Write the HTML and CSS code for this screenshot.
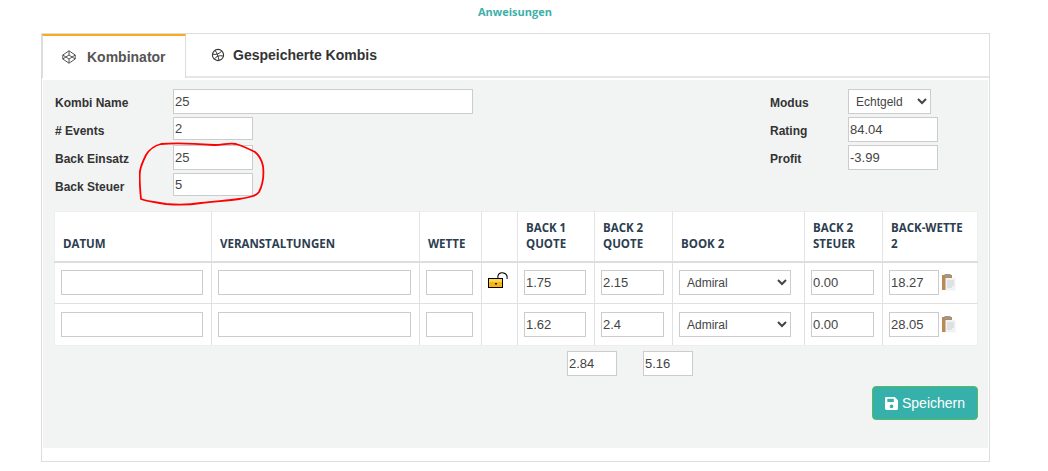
FILE: index.html
```html
<!DOCTYPE html>
<html lang="de">
<head>
<meta charset="utf-8">
<title>Kombinator</title>
<link rel="stylesheet" href="styles.css">
</head>
<body>
<div class="top-link"><a href="#">Anweisungen</a></div>
<div class="card">
  <div class="tabs">
    <div class="tab active">
      <svg class="tab-icon" viewBox="0 0 14 14"><path d="M7 .8 13.200 5V9L7 13.200 .8 9V5Z M.8 5 7 9 13.200 5 M.8 9 7 5 13.200 9 M7 .8V5M7 9V13.200" fill="none" stroke="#555" stroke-width="1"/></svg>
      <span>Kombinator</span>
    </div>
    <div class="tab">
      <svg class="tab-icon" viewBox="0 0 14 14"><circle cx="7" cy="7" r="5.600" fill="none" stroke="#333" stroke-width="1.100"/><path d="M4 2.200C6 5 7.500 8.500 8 12.400M1.600 6.200C5 7 8.500 5.800 10.800 3M3.400 11.200C5 8.200 8.600 7 12.500 8.200" fill="none" stroke="#333" stroke-width="1"/></svg>
      <span>Gespeicherte Kombis</span>
    </div>
  </div>
  <div class="panel">
    <div class="form-head">
      <div class="form-col left">
        <div class="row"><label>Kombi Name</label><input class="field wide" value="25"></div>
        <div class="row"><label># Events</label><input class="field short low" value="2"></div>
        <div class="row"><label>Back Einsatz</label><input class="field short" value="25"></div>
        <div class="row"><label>Back Steuer</label><input class="field short low" value="5"></div>
      </div>
      <div class="form-col right">
        <div class="row"><label>Modus</label><select class="field mode"><option>Echtgeld</option></select></div>
        <div class="row"><label>Rating</label><input class="field stat" value="84.04"></div>
        <div class="row"><label>Profit</label><input class="field stat" value="-3.99"></div>
      </div>
    </div>
    <table class="grid">
      <colgroup>
        <col class="c1"><col class="c2"><col class="c3"><col class="c4"><col class="c5"><col class="c6"><col class="c7"><col class="c8"><col class="c9">
      </colgroup>
      <thead>
        <tr>
          <th>DATUM</th><th>VERANSTALTUNGEN</th><th>WETTE</th><th></th>
          <th>BACK 1 QUOTE</th><th>BACK 2 QUOTE</th><th>BOOK 2</th><th>BACK 2 STEUER</th><th>BACK-WETTE 2</th>
        </tr>
      </thead>
      <tbody>
        <tr>
          <td><input class="field fill"></td><td><input class="field fill"></td><td><input class="field fill"></td>
          <td class="lock-cell"><svg class="lock" viewBox="0 0 20 16"><path d="M10 7V4.500C10 2.200 11.800 .8 14 .8s5 1.400 5 3.700V7" fill="none" stroke="#000" stroke-width="1.200"/><path d="M11.500 7V4.800C11.500 3.200 12.700 2.200 14 2.200s3.500 1 3.500 2.600V7" fill="none" stroke="#fff" stroke-width="1.600"/><rect x=".5" y="6.500" width="14" height="9" fill="#f7b512" stroke="#000"/><rect x="1" y="7" width="13" height="3" fill="#fcd354"/><rect x="7" y="11" width="2" height="1.500" fill="#222"/></svg></td>
          <td><input class="field fill" value="1.75"></td><td><input class="field fill" value="2.15"></td>
          <td class="book-cell"><select class="field fill book"><option>Admiral</option></select></td>
          <td><input class="field fill" value="0.00"></td>
          <td class="bet"><input class="field bet-input" value="18.27"><svg class="clip" viewBox="0 0 14 17"><rect x="0" y="1" width="10" height="15" fill="#b98a55"/><rect x="2.500" y="0" width="6" height="3" fill="#9a9a90"/><rect x="3.500" y="4" width="10" height="12.500" fill="#f0f2f4"/><path d="M5 7H12M5 9H12M5 11H12M5 13H10" stroke="#cdd0d5"/></svg></td>
        </tr>
        <tr>
          <td><input class="field fill"></td><td><input class="field fill"></td><td><input class="field fill"></td>
          <td></td>
          <td><input class="field fill" value="1.62"></td><td><input class="field fill" value="2.4"></td>
          <td class="book-cell"><select class="field fill book"><option>Admiral</option></select></td>
          <td><input class="field fill" value="0.00"></td>
          <td class="bet"><input class="field bet-input" value="28.05"><svg class="clip" viewBox="0 0 14 17"><rect x="0" y="1" width="10" height="15" fill="#b98a55"/><rect x="2.500" y="0" width="6" height="3" fill="#9a9a90"/><rect x="3.500" y="4" width="10" height="12.500" fill="#f0f2f4"/><path d="M5 7H12M5 9H12M5 11H12M5 13H10" stroke="#cdd0d5"/></svg></td>
        </tr>
      </tbody>
    </table>
    <div class="totals">
      <input class="field total" value="2.84">
      <input class="field total" value="5.16">
    </div>
    <div class="actions">
      <button class="save" type="button">
        <svg class="save-icon" viewBox="0 0 14 14"><path d="M1.500 0H10.500L14 3.500V12.500A1.500 1.500 0 0 1 12.500 14H1.500A1.500 1.500 0 0 1 0 12.500V1.500A1.500 1.500 0 0 1 1.500 0ZM2.500 2V5.500H9.500V2ZM7 8A2 2 0 1 0 7 12 2 2 0 1 0 7 8Z" fill="#fff" fill-rule="evenodd"/></svg>
        Speichern
      </button>
    </div>
  </div>
</div>
<svg class="scribble" viewBox="0 0 140 75"><path d="M75 4C85 4 90 1.500 97 3 104 5 110 8 116 11 121 15 123 20 124 25 125 33 124 43 120 51 117 55 112 56 100 58 88 60 76 60 62 62 50 64 38 64 27 63 15 61 6 60 2 58 1 48 0 38 1 30 2 24 4 20 7 14 10 9 14 5 22 3 32 2 50 2 75 4Z" fill="none" stroke="#f00" stroke-width="1.800"/></svg>
</body>
</html>
```
FILE: styles.css
```css
* { box-sizing: border-box; }
html, body { margin: 0; height: 471px; overflow: hidden; background: #fff; }
body { position: relative; font-family: "Liberation Sans", Arial, sans-serif; color: #333; }

.top-link { height: 33px; padding: 5px 18px 0 0; text-align: center; font: 700 11px/14px "Open Sans", sans-serif; }
.top-link a { color: #3cb0a9; text-decoration: none; }

.card { width: 949px; height: 429px; margin-left: 41px; border: 1px solid #ddd; padding: 0 1px; }

.tabs { display: flex; height: 44px; margin: 0 -1px; border-bottom: 2px solid #e6e6e6; }
.tab { display: flex; align-items: center; font-size: 14px; font-weight: 700; padding: 0 21px 0 25px; gap: 8px; color: #333; }
.tab.active { flex: none; width: 144px; padding-left: 19px; gap: 11px; border-top: 2px solid #fbaa19; border-left: 1px solid #ddd; border-right: 1px solid #ddd; margin-bottom: -2px; background: #fff; color: #555; }
.tab-icon { flex: none; width: 14px; height: 14px; }

.panel { height: 368px; margin-top: 2px; background: #f2f4f3; padding: 9px 10px 0 11px; }

.form-head { display: flex; justify-content: space-between; height: 122px; padding-left: 1px; }
.form-col.right { width: 168px; margin-right: 40px; }
.row { display: flex; height: 28px; align-items: flex-start; }
.row label { font-size: 12px; font-weight: 700; line-height: 28px; color: #333; }
.left .row label { width: 118px; }
.right .row label { width: 78px; }

.field { height: 25px; border: 1px solid #ccc; background: #fff; padding: 0 1px; font: 13px "Liberation Sans", Arial, sans-serif; color: #444; border-radius: 0; outline: none; }
.wide { width: 300px; }
.short { width: 80px; }
.low { height: 23px; }
.stat { width: 90px; }
.mode { width: 83px; font-size: 12px; padding-left: 3px; }

.grid { width: 923px; table-layout: fixed; border-collapse: collapse; background: #fff; }
.c1 { width: 157px; } .c2 { width: 208px; } .c3 { width: 62px; } .c4 { width: 36px; } .c5 { width: 77px; }
.c6 { width: 78px; } .c7 { width: 132px; } .c8 { width: 78px; } .c9 { width: 95px; }
.grid th { height: 50px; border: 1px solid #e4e4e4; border-top-color: #eee; border-bottom: 2px solid #ddd; padding: 7px 8px 9px; vertical-align: bottom; text-align: left; font: 700 11.5px/16px "Open Sans", sans-serif; color: #2c3e50; }
.grid td { height: 42px; border: 1px solid #e0e0e0; padding: 0 8px 0 6px; vertical-align: middle; }
.grid tr > :first-child { border-left-color: #eee; }
.grid tr > :last-child { border-right-color: #eee; }
.grid tbody tr:last-child td { border-bottom-color: #eee; }
.fill { display: block; width: 100%; }
.grid .book-cell { padding-right: 13px; }
.book { font-size: 12px; padding-left: 3px; }
.bet { white-space: nowrap; }
.bet-input { width: 50px; vertical-align: middle; }
.clip { width: 14px; height: 17px; margin-left: 3px; vertical-align: middle; }
.lock { display: block; width: 20px; height: 16px; margin-top: -6px; }

.totals { display: flex; gap: 26px; padding: 5px 0 0 513px; }
.total { width: 50px; }

.actions { display: flex; justify-content: flex-end; margin-top: 10px; }
.save { display: flex; align-items: center; justify-content: center; gap: 4px; width: 106px; height: 34px; border: 1px solid #5cb85c; border-radius: 4px; background: #36b0ab; color: #fff; font: 14px "Liberation Sans", Arial, sans-serif; padding: 0; }
.save-icon { width: 13px; height: 13px; }

.scribble { position: absolute; left: 139px; top: 141px; width: 140px; height: 75px; pointer-events: none; }
```
